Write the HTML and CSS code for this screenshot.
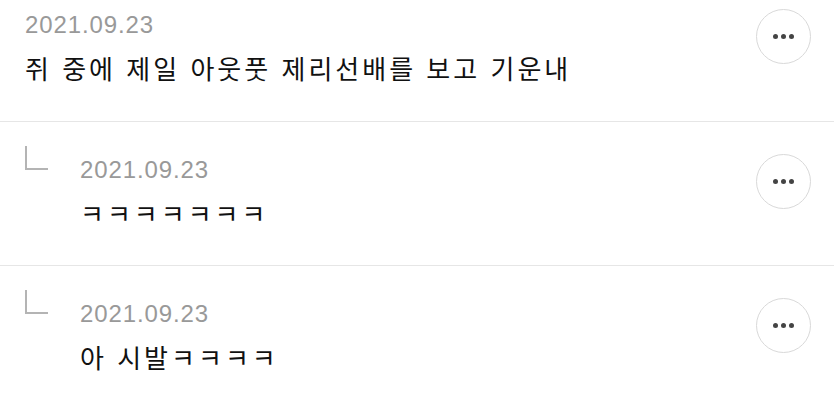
FILE: index.html
```html
<!DOCTYPE html>
<html lang="ko">
<head>
  <meta charset="UTF-8">
  <title>댓글</title>
  <link rel="stylesheet" href="styles.css">
</head>
<body>
  <ul class="comments">
    <li class="comment first">
      <div class="body">
        <div class="date">2021.09.23</div>
        <p class="text">쥐 중에 제일 아웃풋 제리선배를 보고 기운내</p>
      </div>
      <button class="more" aria-label="더보기"><span></span><span></span><span></span></button>
    </li>
    <li class="comment reply">
      <span class="arrow"></span>
      <div class="body">
        <div class="date">2021.09.23</div>
        <p class="text">ㅋㅋㅋㅋㅋㅋㅋ</p>
      </div>
      <button class="more" aria-label="더보기"><span></span><span></span><span></span></button>
    </li>
    <li class="comment reply">
      <span class="arrow"></span>
      <div class="body">
        <div class="date">2021.09.23</div>
        <p class="text">아 시발ㅋㅋㅋㅋ</p>
      </div>
      <button class="more" aria-label="더보기"><span></span><span></span><span></span></button>
    </li>
  </ul>
</body>
</html>
```

FILE: styles.css
```css
body {
  margin: 0;
  background: #fff;
  font-family: "Noto Sans CJK KR", "Noto Sans", sans-serif;
  color: #111;
}

.comments {
  list-style: none;
  margin: 0;
  padding: 0;
}

.comment {
  display: flex;
  align-items: flex-start;
  padding: 33px 23px 34px 25px;
  border-bottom: 1px solid #e6e6e6;
}

.comment.first {
  padding-top: 10px;
  height: 77px;
}

.body {
  flex: 1;
}

.reply .body {
  padding-left: 32px;
}

.arrow {
  width: 21px;
  height: 22px;
  margin-top: -9px;
  border-left: 2px solid #b4b4b4;
  border-bottom: 2px solid #b4b4b4;
  flex-shrink: 0;
}

.date {
  font-family: "Liberation Sans", Arial, sans-serif;
  font-size: 24px;
  line-height: 30px;
  letter-spacing: 0.9px;
  color: #999;
}

.text {
  margin: 10px 0 0;
  font-size: 26px;
  line-height: 36px;
  letter-spacing: 3px;
  color: #111;
}

.more {
  width: 55px;
  height: 55px;
  margin-top: -1px;
  border: 1px solid #d9d9d9;
  border-radius: 50%;
  background: #fff;
  display: flex;
  align-items: center;
  justify-content: center;
  gap: 3px;
  padding: 0;
  flex-shrink: 0;
}

.more span {
  width: 5px;
  height: 5px;
  border-radius: 50%;
  background: #444;
}
```
